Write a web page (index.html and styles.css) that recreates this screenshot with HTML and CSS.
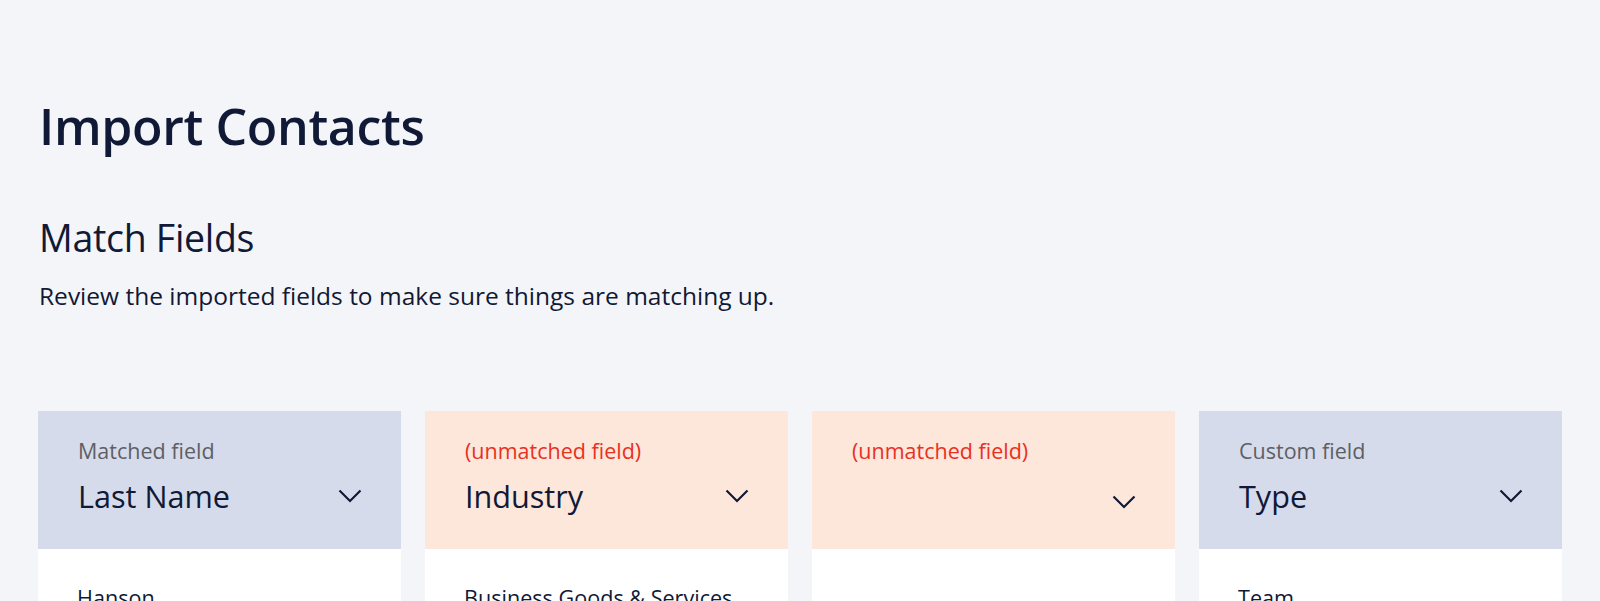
FILE: index.html
```html
<!DOCTYPE html>
<html lang="en">
<head>
<meta charset="utf-8">
<title>Import Contacts</title>
<link rel="stylesheet" href="styles.css">
</head>
<body>
<main class="page">
  <h1 class="title">Import Contacts</h1>
  <section class="intro">
    <h2 class="subtitle">Match Fields</h2>
    <p class="desc">Review the imported fields to make sure things are matching up.</p>
  </section>
  <div class="columns">
    <div class="col">
      <div class="col-head matched">
        <div class="label">Matched field</div>
        <div class="select">
          <span class="value">Last Name</span>
          <svg class="chev" viewBox="0 0 24 14" width="24" height="14"><path d="M1.5 1.5 L12 12 L22.5 1.5" fill="none" stroke="#101935" stroke-width="2.2"/></svg>
        </div>
      </div>
      <div class="col-body">
        <div class="cell">Hanson</div>
        <div class="cell">Miller</div>
      </div>
    </div>
    <div class="col">
      <div class="col-head unmatched">
        <div class="label red">(unmatched field)</div>
        <div class="select">
          <span class="value">Industry</span>
          <svg class="chev" viewBox="0 0 24 14" width="24" height="14"><path d="M1.5 1.5 L12 12 L22.5 1.5" fill="none" stroke="#101935" stroke-width="2.2"/></svg>
        </div>
      </div>
      <div class="col-body">
        <div class="cell">Business Goods &amp; Services</div>
        <div class="cell">Retail</div>
      </div>
    </div>
    <div class="col">
      <div class="col-head unmatched">
        <div class="label red">(unmatched field)</div>
        <div class="select empty">
          <span class="value"></span>
          <svg class="chev" viewBox="0 0 24 14" width="24" height="14"><path d="M1.5 1.5 L12 12 L22.5 1.5" fill="none" stroke="#101935" stroke-width="2.2"/></svg>
        </div>
      </div>
      <div class="col-body">
        <div class="cell">&nbsp;</div>
        <div class="cell">&nbsp;</div>
      </div>
    </div>
    <div class="col">
      <div class="col-head matched">
        <div class="label">Custom field</div>
        <div class="select">
          <span class="value">Type</span>
          <svg class="chev" viewBox="0 0 24 14" width="24" height="14"><path d="M1.5 1.5 L12 12 L22.5 1.5" fill="none" stroke="#101935" stroke-width="2.2"/></svg>
        </div>
      </div>
      <div class="col-body">
        <div class="cell">Team</div>
        <div class="cell">Partner</div>
      </div>
    </div>
  </div>
</main>
</body>
</html>
```
FILE: styles.css
```css
* { box-sizing: border-box; }
html, body { margin: 0; padding: 0; }
body {
  background: #f4f5f9;
  color: #101935;
  font-family: "Open Sans", "Noto Sans", sans-serif;
  overflow: hidden;
}
.page {
  padding: 98px 38px 0 38px;
}
.title {
  margin: 0 0 0 1px;
  font-size: 50px;
  line-height: 56px;
  font-weight: 600;
  letter-spacing: -0.35px;
}
.intro {
  margin-top: 64px;
}
.subtitle {
  margin: 0 0 0 1px;
  font-size: 37.5px;
  line-height: 40px;
  font-weight: 400;
  letter-spacing: -0.3px;
}
.desc {
  margin: 23px 0 0 1px;
  font-size: 24.5px;
  line-height: 30px;
}
.columns {
  margin-top: 100px;
  display: grid;
  grid-template-columns: repeat(4, 1fr);
  gap: 24px;
}
.col { display: flex; flex-direction: column; }
.col-head {
  height: 138px;
  padding: 27px 40px 0 40px;
}
.matched { background: #d6dbec; }
.unmatched { background: #fde6da; }
.label {
  font-size: 21.5px;
  line-height: 26px;
  color: #5e5f64;
}
.label.red { color: #e8311f; }
.select {
  margin-top: 10px;
  display: flex;
  align-items: center;
  justify-content: space-between;
  height: 44px;
}
.value {
  font-size: 30.6px;
  line-height: 44px;
}
.chev { flex: none; margin-right: -1px; }
.select.empty .chev { margin-top: 12px; }
.col-body {
  background: #fff;
  padding: 30px 40px 20px 39px;
}
.cell {
  font-size: 21.6px;
  line-height: 30px;
  padding: 4px 0;
}
```
